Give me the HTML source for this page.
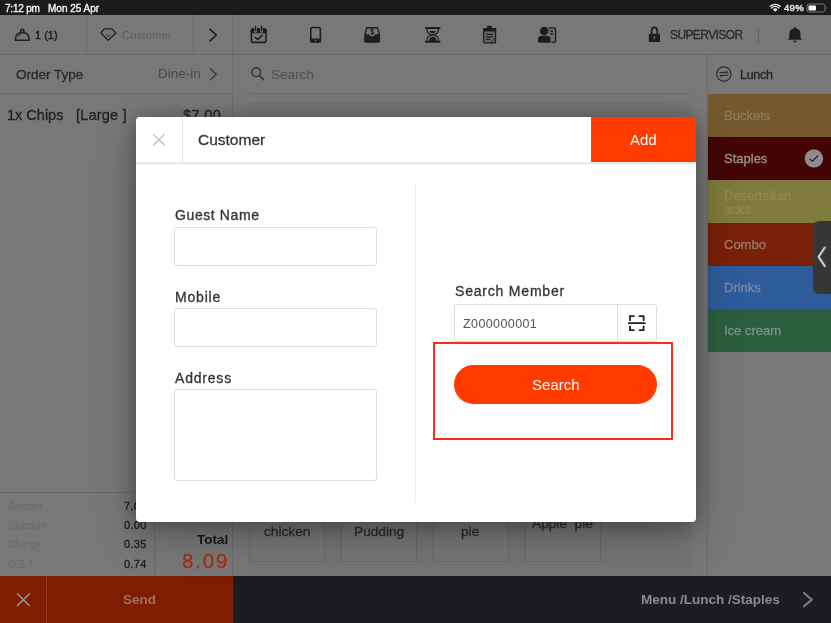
<!DOCTYPE html>
<html><head><meta charset="utf-8">
<style>
*{box-sizing:border-box;margin:0;padding:0}
html,body{width:831px;height:623px;overflow:hidden;background:#787878;font-family:"Liberation Sans",sans-serif}
.a{position:absolute}
.t{position:absolute;white-space:pre;line-height:1;will-change:transform}
.ln{position:absolute;background:#6a6a6a}
.m{-webkit-text-stroke:0.3px currentColor}
</style></head><body>
<!-- status bar -->
<div class="a" style="left:0;top:0;width:831px;height:15px;background:#1b1b1e"></div>
<div class="t" style="left:5px;top:3.5px;font-size:10px;letter-spacing:-0.2px;-webkit-text-stroke:0.4px #eee;color:#eee">7:12 pm</div>
<div class="t" style="left:47.5px;top:3.5px;font-size:10px;-webkit-text-stroke:0.4px #eee;color:#eee">Mon 25 Apr</div>
<div class="t" style="left:784px;top:3px;font-size:9.5px;letter-spacing:0.3px;-webkit-text-stroke:0.4px #eee;color:#eee">49%</div>

<!-- toolbar -->
<div class="ln" style="left:0;top:54px;width:831px;height:1px"></div>
<div class="ln" style="left:86px;top:15px;width:1px;height:39px"></div>
<div class="ln" style="left:193px;top:15px;width:1px;height:39px"></div>
<div class="ln" style="left:232px;top:15px;width:1px;height:561px"></div>
<div class="t" style="left:35px;top:30px;font-size:11px;-webkit-text-stroke:0.45px #222;color:#222">1 (1)</div>
<div class="t" style="left:122px;top:30px;font-size:11px;letter-spacing:0.3px;color:#5e5e5e">Customer</div>
<div class="t m" style="left:670px;top:29px;font-size:12px;letter-spacing:-0.6px;color:#2a2a2a">SUPERVISOR</div>
<div class="ln" style="left:758px;top:27px;width:1px;height:16px"></div>

<!-- left panel -->
<div class="t m" style="left:16px;top:67.5px;font-size:13.5px;color:#2a2a2a">Order Type</div>
<div class="t" style="left:158px;top:67px;font-size:13.5px;color:#4a4a4a">Dine-in</div>
<div class="ln" style="left:0;top:93px;width:232px;height:1px"></div>
<div class="t m" style="left:7px;top:108px;font-size:14.5px;color:#222">1x Chips</div>
<div class="t m" style="left:76px;top:108px;font-size:14.5px;letter-spacing:0.2px;color:#222">[Large ]</div>
<div class="t m" style="left:183px;top:108px;font-size:14.5px;letter-spacing:0.4px;color:#222">$7.00</div>
<div class="ln" style="left:0;top:492px;width:232px;height:1px"></div>
<div class="ln" style="left:154px;top:492px;width:1px;height:84px"></div>

<!-- center -->
<div class="t" style="left:271px;top:67.5px;font-size:13.5px;color:#505050">Search</div>
<div class="ln" style="left:249px;top:93px;width:443px;height:1px"></div>

<!-- right sidebar -->
<div class="ln" style="left:707px;top:54px;width:1px;height:522px"></div>
<div class="t m" style="left:740px;top:68.5px;font-size:12.5px;letter-spacing:-0.3px;color:#262626">Lunch</div>
<div class="a" style="left:708px;top:94px;width:123px;height:43px;background:#76592f"></div>
<div class="a" style="left:708px;top:137px;width:123px;height:43px;background:#430604"></div>
<div class="a" style="left:708px;top:180px;width:123px;height:43px;background:#7e7b3c"></div>
<div class="a" style="left:708px;top:223px;width:123px;height:43px;background:#782008"></div>
<div class="a" style="left:708px;top:266px;width:123px;height:43px;background:#2e5b9a"></div>
<div class="a" style="left:708px;top:309px;width:123px;height:43px;background:#2b5e3e"></div>

<!-- bottom bar -->
<div class="a" style="left:0;top:576px;width:831px;height:47px;background:#1c1d20"></div>
<div class="a" style="left:0;top:576px;width:233px;height:47px;background:#7e1d00"></div>
<div class="a" style="left:46px;top:576px;width:1px;height:47px;background:#8f3a20"></div>
<div class="t" style="left:123px;top:593px;font-size:13.5px;font-weight:700;color:#a07060">Send</div>
<div class="t" style="left:641px;top:593px;font-size:13.5px;font-weight:700;color:#8a8a8a">Menu /Lunch /Staples</div>


<div class="t" style="left:724px;top:108.5px;font-size:13px;-webkit-text-stroke:0.3px #8b7b5c;color:#8b7b5c">Buckets</div>
<div class="t" style="left:724px;top:152px;font-size:13px;-webkit-text-stroke:0.3px #a09490;color:#a09490">Staples</div>
<div class="t" style="left:724px;top:188.5px;font-size:13px;line-height:13.5px;-webkit-text-stroke:0.3px #8e8b55;color:#8e8b55;width:70px;white-space:normal;word-break:break-all">Deserts&amp;snacks</div>
<div class="t" style="left:724px;top:238px;font-size:13px;-webkit-text-stroke:0.3px #9b7868;color:#9b7868">Combo</div>
<div class="t" style="left:724px;top:281px;font-size:13px;-webkit-text-stroke:0.3px #7d8aa0;color:#7d8aa0">Drinks</div>
<div class="t" style="left:724px;top:324px;font-size:13px;-webkit-text-stroke:0.3px #7e9385;color:#7e9385">Ice cream</div>
<div class="a" style="left:812.5px;top:220.5px;width:30px;height:73px;background:#363636;border-radius:6px"></div>

<!-- totals -->
<div class="t" style="left:8px;top:502px;font-size:10px;color:#6a6a6a">Amount</div>
<div class="t" style="left:8px;top:521px;font-size:10px;color:#6a6a6a">Discount</div>
<div class="t" style="left:8px;top:540px;font-size:10px;color:#6a6a6a">Charge</div>
<div class="t" style="left:8px;top:559.5px;font-size:10px;color:#6a6a6a">G.S.T.</div>
<div class="t" style="right:684.7px;top:500.5px;font-size:11px;letter-spacing:0.3px;-webkit-text-stroke:0.35px #1e1e1e;color:#1e1e1e">7.00</div>
<div class="t" style="right:684.7px;top:519.5px;font-size:11px;letter-spacing:0.3px;-webkit-text-stroke:0.35px #1e1e1e;color:#1e1e1e">0.00</div>
<div class="t" style="right:684.7px;top:538.5px;font-size:11px;letter-spacing:0.3px;-webkit-text-stroke:0.35px #1e1e1e;color:#1e1e1e">0.35</div>
<div class="t" style="right:684.7px;top:558.5px;font-size:11px;letter-spacing:0.3px;-webkit-text-stroke:0.35px #1e1e1e;color:#1e1e1e">0.74</div>
<div class="t" style="right:603px;top:533px;font-size:13.5px;font-weight:700;color:#161616">Total</div>
<div class="t" style="right:601.5px;top:550.5px;font-size:20.5px;letter-spacing:1.8px;color:#a82e12;-webkit-text-stroke:0.3px #a82e12">8.09</div>

<!-- product grid -->
<div class="a" style="left:249px;top:103px;width:443px;height:473px;background:#747474"></div>
<div class="a" style="left:249px;top:462px;width:76px;height:100px;border:1px solid #6a6a6a;background:#767676"></div>
<div class="a" style="left:341px;top:462px;width:76px;height:100px;border:1px solid #6a6a6a;background:#767676"></div>
<div class="a" style="left:433px;top:462px;width:76px;height:100px;border:1px solid #6a6a6a;background:#767676"></div>
<div class="a" style="left:525px;top:462px;width:76px;height:100px;border:1px solid #6a6a6a;background:#767676"></div>
<div class="t m" style="left:263.5px;top:524.5px;font-size:13.7px;color:#2a2a2a">chicken</div>
<div class="t m" style="left:353.5px;top:524.5px;font-size:13.7px;color:#2a2a2a">Pudding</div>
<div class="t m" style="left:461px;top:525px;font-size:13.7px;color:#2a2a2a">pie</div>
<div class="t m" style="left:531.5px;top:517px;font-size:13.7px;color:#2a2a2a">Apple  pie</div>

<svg class="a" style="left:0;top:0" width="831" height="623" viewBox="0 0 831 623">
<!-- status wifi -->
<g fill="#eee">
<path d="M775.2 11.8 L772.9 9.4 A3.3 3.3 0 0 1 777.5 9.4 Z"/>
</g>
<g fill="none" stroke="#eee" stroke-width="1.3" stroke-linecap="round">
<path d="M771.6 8.0 A5 5 0 0 1 778.8 8.0"/>
<path d="M770.3 6.3 A7 7 0 0 1 780.1 6.3"/>
</g>
<!-- battery -->
<rect x="807" y="4" width="18" height="8" rx="2.3" fill="none" stroke="#8a8a8c" stroke-width="0.9"/>
<rect x="808.5" y="5.5" width="7.5" height="5" rx="1" fill="#fff"/>
<path d="M825.8 6.6 Q827.2 8 825.8 9.4 Z" fill="#8a8a8c"/>

<!-- cloche -->
<g fill="none" stroke="#222" stroke-width="1.5">
<circle cx="22.3" cy="30.9" r="1.7"/>
<path d="M15.3 40.3 Q15.5 32.6 22.3 32.6 Q29.1 32.6 29.4 40.3 Z" stroke-linejoin="round"/>
<path d="M18.3 36.8 Q19.5 34.5 21.6 33.8" stroke-width="1"/>
</g>
<!-- diamond -->
<g fill="none" stroke="#222" stroke-width="1.3" stroke-linejoin="round">
<path d="M104.3 28.9 L112 28.9 L115.8 33 L108.2 40.3 L100.9 33 Z"/>
<path d="M106.4 34.5 L108.4 36.4 L110.5 34.5" stroke-width="1"/>
</g>
<!-- chevrons -->
<path d="M210.1 29.3 L216.4 35 L210.1 40.9" fill="none" stroke="#1c1c1c" stroke-width="1.6" stroke-linecap="round" stroke-linejoin="round"/>
<path d="M210.1 68.5 L216.2 74.2 L210.1 79.9" fill="none" stroke="#3a3a3a" stroke-width="1.3" stroke-linecap="round" stroke-linejoin="round"/>

<!-- calendar -->
<g fill="none" stroke="#1e1e20" stroke-width="1.6">
<rect x="251.4" y="29" width="14.6" height="13.4" rx="2"/>
<path d="M255.3 37.5 L257.6 39.5 L262.3 35.3" stroke-linecap="round" stroke-linejoin="round"/>
</g>
<rect x="250.6" y="28.3" width="16" height="5" rx="2" fill="#1e1e20"/>
<g stroke="#787878" stroke-width="2.8" stroke-linecap="round"><path d="M255.5 25 V31.4 M261.6 25 V31.4"/></g>
<g stroke="#1e1e20" stroke-width="1.5" stroke-linecap="round"><path d="M255.5 26.2 V30.5 M261.6 26.2 V30.5"/></g>

<!-- tablet -->
<rect x="310.8" y="27.5" width="9.6" height="14.5" rx="1.6" fill="none" stroke="#1e1e20" stroke-width="1.6"/>
<rect x="310.2" y="38.6" width="10.8" height="4" rx="1.4" fill="#1e1e20"/>
<circle cx="315.6" cy="40.5" r="0.8" fill="#777"/>

<!-- cash drawer -->
<g fill="#1e1e20">
<path d="M366.4 27 H378 L380.1 34.5 V41 Q380.1 42.7 378.4 42.7 H365.9 Q364.2 42.7 364.2 41 V34.5 Z M367.3 28.6 L365.8 34.2 H368.8 L370.5 36.2 H373.8 L375.5 34.2 H378.5 L377 28.6 Z"/>
</g>
<path d="M373.6 29.6 Q373 29 372.2 29 Q370.6 29 370.6 30.2 Q370.6 31.2 372.2 31.5 Q373.8 31.8 373.8 32.9 Q373.8 34.1 372.2 34.1 Q371.2 34.1 370.6 33.4 M372.2 28 V35" fill="none" stroke="#1e1e20" stroke-width="1"/>

<!-- hourglass -->
<g fill="#1e1e20">
<rect x="425" y="26.9" width="15.3" height="2" rx="0.5"/>
<rect x="425" y="40.8" width="15.3" height="2" rx="0.5"/>
<path d="M429.4 31 H436 Q435.6 32.9 432.7 33.5 Q429.8 32.9 429.4 31 Z"/>
<path d="M428.9 40.9 Q429.1 37.1 432.7 36.5 Q436.3 37.1 436.5 40.9 Z"/>
</g>
<g fill="none" stroke="#1e1e20" stroke-width="1.2">
<path d="M427.1 28.8 V30.3 Q427.1 33.4 431.9 34.8 Q427.1 36.2 427.1 39.3 V40.9"/>
<path d="M438.3 28.8 V30.3 Q438.3 33.4 433.5 34.8 Q438.3 36.2 438.3 39.3 V40.9"/>
</g>

<!-- clipboard -->
<rect x="483.7" y="28.6" width="11.8" height="14.3" rx="1.2" fill="#686868" stroke="#1e1e20" stroke-width="1.4"/>
<rect x="483" y="28" width="13.2" height="3.4" rx="1" fill="#1e1e20"/>
<path d="M487 28.2 V27 Q487 25.7 488.3 25.7 H490.7 Q492 25.7 492 27 V28.2 Z" fill="#1e1e20"/>
<g stroke="#1e1e20" stroke-width="1.2">
<path d="M486.1 34.3 H493 M486.1 36.8 H493 M486.1 39.4 H490.3"/>
<path d="M491.6 41.6 L494.6 38.8" stroke-width="1"/>
</g>

<!-- person card -->
<path d="M548.4 27.9 H554.3 Q555.6 27.9 555.6 29.2 V41.1 Q555.6 42.4 554.3 42.4 H551.5" fill="#6a6a6a" stroke="#1e1e20" stroke-width="1.4"/>
<g fill="#1e1e20">
<circle cx="544.2" cy="31.05" r="4.3"/>
<path d="M538 39.2 Q538 35.8 541.6 35.8 H547 Q550.6 35.8 550.6 39.2 V41.4 Q550.6 42.8 549.2 42.8 H539.4 Q538 42.8 538 41.4 Z"/>
</g>
<g stroke="#1e1e20" stroke-width="1.3"><path d="M550.2 31.05 H552.9 M550.2 33.75 H552.9"/></g>

<!-- lock -->
<path d="M651.6 34 V31 Q651.6 27.4 654.4 27.4 Q657.2 27.4 657.2 31 V34" fill="none" stroke="#1e1e20" stroke-width="1.7"/>
<rect x="648.8" y="33.8" width="11.2" height="8.2" rx="0.8" fill="#1e1e20"/>
<path d="M654.4 36.2 a1 1 0 0 1 0.6 1.8 L654.4 39.6 L653.8 38 a1 1 0 0 1 0.6 -1.8 Z" fill="#777"/>

<!-- bell -->
<g fill="#1e1e20">
<path d="M795 27 Q795.8 27 796 28.3 Q800.5 29.2 800.5 34.5 V37.5 Q800.8 39 802.3 39.8 H787.5 Q789 39 789.3 37.5 V34.5 Q789.3 29.2 794 28.3 Q794.2 27 795 27 Z"/>
<path d="M793.2 40.7 H796.8 Q796.5 42.5 795 42.5 Q793.5 42.5 793.2 40.7 Z"/>
</g>
<rect x="758" y="27" width="1" height="16" fill="#666"/>

<!-- search -->
<circle cx="256.2" cy="72.2" r="4.4" fill="none" stroke="#303030" stroke-width="1.4"/>
<path d="M259.6 75.7 L263.5 79.6" stroke="#303030" stroke-width="1.6" stroke-linecap="round"/>

<!-- lunch swap -->
<circle cx="723.8" cy="74" r="7.2" fill="none" stroke="#2a2a2a" stroke-width="1.2"/>
<g stroke="#2a2a2a" stroke-width="1.1" fill="#2a2a2a">
<path d="M719.2 72.6 H727.5" />
<path d="M720 75.3 H728.4" />
</g>
<path d="M728.6 72.6 L725.6 70.4 V72.6 Z" fill="#2a2a2a"/>
<path d="M719 75.3 L722 77.5 V75.3 Z" fill="#2a2a2a"/>

<!-- staples check -->
<circle cx="813.9" cy="158.4" r="9.2" fill="#8c8c8c"/>
<path d="M809.9 159.2 L812.4 161.4 L817.7 155.8" fill="none" stroke="#3a0a06" stroke-width="1.1" stroke-linecap="round" stroke-linejoin="round"/>

<!-- bottom X -->
<path d="M17.6 594 L29.2 605.5 M29.2 594 L17.6 605.5" stroke="#9a9290" stroke-width="1.7" stroke-linecap="round"/>
<!-- bottom chevron -->
<path d="M804 593 L811.8 599.6 L804 606.3" fill="none" stroke="#7a7a7e" stroke-width="2.1" stroke-linecap="round" stroke-linejoin="round"/>

<path d="M824.8 247.5 L818.6 256.8 L824.8 266.2" fill="none" stroke="#cfcfcf" stroke-width="2.1" stroke-linecap="round" stroke-linejoin="round"/>
</svg>

<!-- modal -->
<div class="a" style="left:135.5px;top:117px;width:560px;height:405px;background:#fff;border-radius:4px;box-shadow:0 2px 20px rgba(0,0,0,0.28),0 14px 44px rgba(0,0,0,0.25)"></div>
<div class="a" style="left:135.5px;top:162px;width:560px;height:2px;background:#efefef"></div><div class="a" style="left:135.5px;top:162.5px;width:560px;height:1px;background:#e2e2e2"></div>
<div class="a" style="left:182px;top:117px;width:1px;height:45px;background:#e6e6e6"></div>
<div class="t m" style="left:198px;top:132px;font-size:15.5px;color:#333">Customer</div>
<div class="a" style="left:591px;top:117px;width:105px;height:45px;background:#ff3b00;border-top-right-radius:1px"></div>
<div class="t" style="left:630px;top:132px;font-size:15px;color:#fff">Add</div>
<div class="a" style="left:415px;top:183px;width:1px;height:320px;background:#eee"></div>

<div class="t m" style="left:175px;top:208px;font-size:14px;letter-spacing:0.6px;color:#333">Guest Name</div>
<div class="a" style="left:174px;top:227px;width:203px;height:39px;border:1px solid #ddd;border-radius:3px"></div>
<div class="t m" style="left:175px;top:290px;font-size:14px;letter-spacing:0.8px;color:#333">Mobile</div>
<div class="a" style="left:174px;top:308px;width:203px;height:39px;border:1px solid #ddd;border-radius:3px"></div>
<div class="t m" style="left:175px;top:370.5px;font-size:14px;letter-spacing:0.8px;color:#333">Address</div>
<div class="a" style="left:174px;top:389px;width:203px;height:92px;border:1px solid #ddd;border-radius:3px"></div>

<div class="t m" style="left:455px;top:283.5px;font-size:14px;letter-spacing:0.8px;color:#333">Search Member</div>
<div class="a" style="left:454px;top:304px;width:203px;height:38px;border:1px solid #ddd;border-radius:3px"></div>
<div class="a" style="left:617px;top:304px;width:1px;height:38px;background:#ddd"></div>
<div class="t" style="left:463px;top:317.5px;font-size:12.5px;letter-spacing:0.4px;color:#555">Z000000001</div>
<div class="a" style="left:433px;top:342px;width:240px;height:98px;border:2px solid #ff2a1a"></div>
<div class="a" style="left:454px;top:365px;width:203px;height:39px;background:#ff3b00;border-radius:20px"></div>
<div class="t" style="left:532px;top:377px;font-size:15px;color:#fff">Search</div>

<svg class="a" style="left:0;top:0" width="831" height="623" viewBox="0 0 831 623">
<path d="M153.2 134.1 L164.6 145.3 M164.6 134.1 L153.2 145.3" stroke="#bdbdbd" stroke-width="1.3"/>
<g fill="none" stroke="#222" stroke-width="1.8" stroke-linecap="round">
<path d="M630 320.2 V316.2 H633.8 M639.6 316.2 H643.6 V320.2 M630 326.3 V330.1 H633.8 M639.6 330.1 H643.6 V326.3"/>
<path d="M628.8 323.2 H644.8"/>
</g>
</svg>
</body></html>
